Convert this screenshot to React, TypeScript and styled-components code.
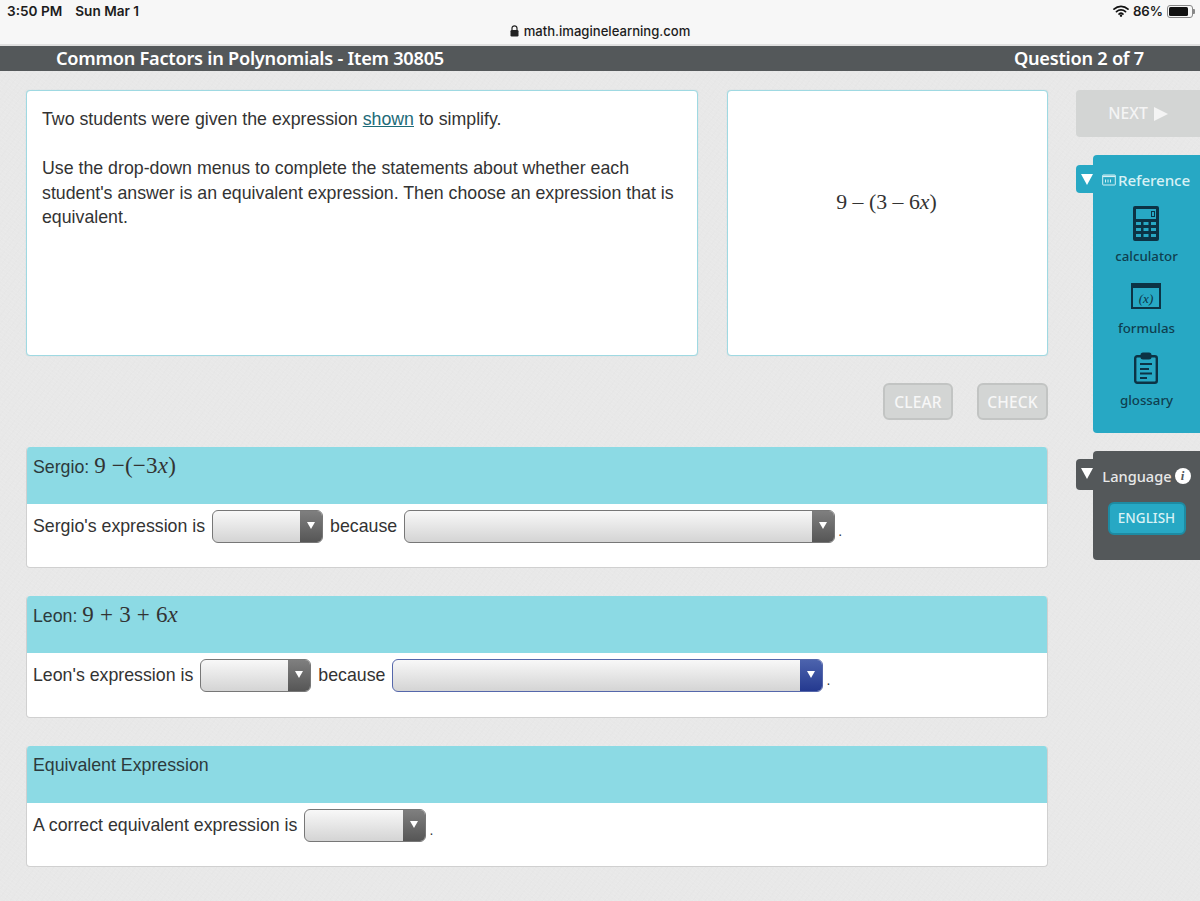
import React from "react";
import styled, { createGlobalStyle } from "styled-components";

const Global = createGlobalStyle`
  html, body { margin: 0; padding: 0; }
  body {
    width: 1200px; height: 901px; overflow: hidden;
    background-color: #e8e8e8;
    font-family: "Liberation Sans", Arial, sans-serif;
    color: #333;
  }
`;

const Page = styled.div`
  width: 1200px;
  height: 901px;
  display: flex;
  flex-direction: column;
  overflow: hidden;
  background-color: #e8e8e8;
  background-image:
    repeating-linear-gradient(37deg, rgba(255,255,255,.07) 0 1px, transparent 1px 3px),
    repeating-linear-gradient(-53deg, rgba(0,0,0,.008) 0 1px, transparent 1px 5px);
`;

const Browser = styled.header`
  height: 46px;
  box-sizing: border-box;
  padding: 3px 7px 0;
  background: #f7f7f7;
  border-bottom: 2px solid #e0e0e0;
  display: grid;
  grid-template-columns: 1fr auto 1fr;
  font-family: "Inter", "Liberation Sans", sans-serif;
  color: #1c1c1c;
`;
const StatusLeft = styled.div`
  font-size: 13.6px; font-weight: 600; line-height: 16px; display: flex; gap: 13px;
`;
const Url = styled.div`
  font-size: 13.1px; line-height: 18px; font-weight: 500; margin-top: 14px;
  display: flex; align-items: center; gap: 5px; white-space: nowrap;
`;
const StatusRight = styled.div`
  justify-self: end; display: flex; align-items: flex-start; gap: 4px;
  font-size: 13.2px; font-weight: 600; line-height: 16px;
`;
const Battery = styled.span`
  position: relative;
  width: 26px; height: 13px; box-sizing: border-box; margin-top: 2px; padding: 1px;
  border: 1px solid #888; border-radius: 3px; display: block;
  &::before { content: ""; display: block; width: 86%; height: 100%; background: #111; border-radius: 1.5px; }
  &::after { content: ""; position: absolute; right: -3px; top: 3px; width: 2px; height: 5px; background: #888; border-radius: 0 1px 1px 0; }
`;

const TitleBar = styled.div`
  height: 25px;
  background: #54585a;
  color: #fff;
  display: flex;
  justify-content: space-between;
  padding: 0 56px;
  font-family: "Noto Sans", sans-serif;
  font-weight: 600;
  font-size: 18.2px;
  line-height: 24px;
  white-space: nowrap;
`;
const TitleText = styled.span`letter-spacing: -.25px;`;
const TitleCount = styled(TitleText)``;

const Body = styled.main`
  flex: 1;
  display: flex;
  padding: 19px 0 0 26px;
  gap: 28px;
`;
const Content = styled.div`
  width: 1022px;
  display: flex;
  flex-direction: column;
`;
const TopRow = styled.div`
  display: flex;
  justify-content: space-between;
  height: 266px;
`;
const Card = styled.section<{ $w: number }>`
  width: ${p => p.$w}px;
  box-sizing: border-box;
  background: #fff;
  border: 1px solid #9fd9e2;
  border-radius: 4px;
  box-shadow: 0 0 1px rgba(120,190,200,.5);
`;
const Prompt = styled(Card)`
  padding: 16px 15px;
  font-size: 17.75px;
  line-height: 24.5px;
  color: #333;
`;
const Para = styled.p`
  margin: 0 0 24.5px;
`;
const Shown = styled.span`
  color: #1d6b78;
  text-decoration: underline;
`;
const FigureCard = styled(Card)`
  display: flex;
  justify-content: center;
  padding: 98px 2px 0 0;
  font-family: "Liberation Serif", serif;
  font-size: 21.8px;
  line-height: 26px;
  color: #333;
  white-space: pre;
`;
const Actions = styled.div`
  display: flex;
  justify-content: flex-end;
  gap: 24px;
  margin-top: 27px;
  height: 37px;
`;
const GhostButton = styled.div<{ $w: number }>`
  width: ${p => p.$w}px;
  box-sizing: border-box;
  background: #d3d5d4;
  border: 2px solid #c2c4c3;
  border-radius: 6px;
  color: #f7f7f7;
  font-family: "Noto Sans", sans-serif;
  font-size: 15.5px;
  font-weight: 500;
  line-height: 35px;
  text-align: center;
  letter-spacing: .2px;
`;
const Questions = styled.div`
  margin-top: 27px;
  display: flex;
  flex-direction: column;
  gap: 28px;
`;
const Question = styled.section`
  height: 121.4px;
  box-sizing: border-box;
  background: #fff;
  border: 1px solid #d0d0d0;
  border-top: 0;
  border-radius: 4px;
  overflow: hidden;
  font-size: 17.75px;
  color: #333;
`;
const QuestionHead = styled.div`
  height: 57px;
  box-sizing: border-box;
  background: #8cdae4;
  padding: 7px 6px 0;
  line-height: 24px;
  color: #2c3a3d;
`;
const MathText = styled.span`
  font-family: "Liberation Serif", serif;
  font-size: 23px;
  letter-spacing: .2px;
  color: #333;
`;
const QuestionRow = styled.div`
  display: flex;
  align-items: center;
  gap: 7px;
  padding: 6px 6px 0;
  height: 33px;
  white-space: nowrap;
`;
const Select = styled.div<{ $w: number; $active?: boolean }>`
  width: ${p => p.$w}px;
  height: 33px;
  box-sizing: border-box;
  flex: none;
  display: flex;
  justify-content: flex-end;
  border: 1.5px solid ${p => (p.$active ? "#5567ab" : "#777")};
  border-radius: 6px;
  overflow: hidden;
  background: linear-gradient(#f8f8f8, #d4d4d4);
`;
const SelectArrow = styled.span<{ $active?: boolean }>`
  width: 22px;
  display: flex;
  justify-content: center;
  padding-top: 11px;
  box-sizing: border-box;
  background: ${p => (p.$active ? "linear-gradient(#4c63ad, #24398f)" : "linear-gradient(#7f7f7f, #565656)")};
  &::before {
    content: "";
    width: 0; height: 0;
    border-left: 4px solid transparent;
    border-right: 4px solid transparent;
    border-top: 7px solid #fff;
  }
`;
const Dot = styled.span`
  margin-left: -4px;
  align-self: flex-end;
  line-height: 16px;
  margin-bottom: 4px;
  font-size: 14px;
`;

const Side = styled.aside`
  width: 124px;
  display: flex;
  flex-direction: column;
`;
const NextButton = styled.div`
  height: 47px;
  background: #d3d5d4;
  border-radius: 4px 0 0 4px;
  display: flex;
  align-items: center;
  justify-content: center;
  gap: 6px;
  color: #f4f4f4;
  font-family: "Noto Sans", sans-serif;
  font-size: 15.8px;
  font-weight: 500;
  line-height: 45px;
  padding-left: 0;
  margin-bottom: 18px;
`;
const Flyout = styled.div<{ $mt?: number }>`
  display: flex;
  align-items: flex-start;
  margin-top: ${p => p.$mt ?? 0}px;
`;
const FlyTab = styled.div<{ $bg: string; $h: number; $top: number }>`
  flex: none;
  width: 17px;
  height: ${p => p.$h}px;
  margin-top: ${p => p.$top}px;
  background: ${p => p.$bg};
  border-radius: 4px 0 0 4px;
  display: flex;
  justify-content: center;
  padding-top: 9px;
  box-sizing: border-box;
  padding-left: 5px;
`;
const Panel = styled.div<{ $bg: string; $h: number }>`
  flex: 1;
  height: ${p => p.$h}px;
  background: ${p => p.$bg};
  border-radius: 4px 0 0 4px;
  box-sizing: border-box;
  font-family: "Noto Sans", sans-serif;
  display: flex;
  flex-direction: column;
  align-items: center;
`;
const RefHead = styled.div`
  display: flex;
  align-items: center;
  gap: 2px;
  margin-top: 15px;
  padding-right: 1px;
  color: #d7f1f5;
  font-size: 15.2px;
  font-weight: 500;
  line-height: 20px;
  letter-spacing: -.1px;
  height: 20px;
`;
const Tool = styled.div<{ $iconH: number; $gap: number; $top: number }>`
  display: flex;
  flex-direction: column;
  align-items: center;
  margin-top: ${p => p.$top}px;
  color: #0f3f50;
  font-size: 13.3px;
  font-weight: 500;
  line-height: 18px;
  svg { display: block; height: ${p => p.$iconH}px; margin-bottom: ${p => p.$gap}px; }
`;
const ToolList = styled.div`
  margin-top: 16px;
  display: flex;
  flex-direction: column;
  align-items: center;
`;
const LangHead = styled.div`
  display: flex;
  align-items: center;
  gap: 3px;
  margin-top: 15px;
  color: #e8e8e8;
  font-size: 14.6px;
  font-weight: 500;
  line-height: 20px;
`;
const InfoDot = styled.span`
  width: 16px; height: 16px; border-radius: 50%;
  background: #fff; color: #54585a;
  font-family: "Liberation Serif", serif; font-style: italic; font-weight: 700;
  font-size: 13px; line-height: 16px; text-align: center;
`;
const LangButton = styled.div`
  margin-top: 16px;
  width: 78px;
  height: 33px;
  box-sizing: border-box;
  background: #27a8c4;
  border: 2px solid #1d8ba3;
  border-radius: 6px;
  color: #d9f2f6;
  font-size: 13.5px;
  font-weight: 500;
  line-height: 29px;
  text-align: center;
`;
const TriangleDown = styled.span`
  width: 0; height: 0;
  border-left: 6px solid transparent;
  border-right: 6px solid transparent;
  border-top: 11px solid #fff;
`;
const TriangleRight = styled.span`
  width: 0; height: 0;
  border-top: 7.5px solid transparent;
  border-bottom: 7.5px solid transparent;
  border-left: 14px solid #f4f4f4;
`;
const Wifi = () => (
  <svg width="16" height="12" viewBox="0 0 24 18" style={{ marginTop: 2 }}>
    <path d="M1.5 6.2a15.5 15.5 0 0 1 21 0M5.3 10a10 10 0 0 1 13.4 0M9 13.6a4.8 4.8 0 0 1 6 0" fill="none" stroke="#111" strokeWidth="2.6" strokeLinecap="round" />
    <circle cx="12" cy="16" r="1.8" fill="#111" />
  </svg>
);
const Lock = () => (
  <svg width="9" height="12" viewBox="0 0 9 12">
    <path d="M2 5V3.3a2.5 2.5 0 0 1 5 0V5" fill="none" stroke="#222" strokeWidth="1.2" />
    <rect x=".5" y="5" width="8" height="6.5" rx="1.2" fill="#222" />
  </svg>
);
const BookIcon = () => (
  <svg width="14" height="12" viewBox="0 0 14 12" fill="none" stroke="#d7f1f5">
    <rect x=".7" y="1" width="12.6" height="10" rx=".5" strokeWidth="1" />
    <path d="M.7 2.4h12.6" strokeWidth="1.4" />
    <path d="M3.5 5.5v3M6 5.5v3M8.5 5.5v3" strokeWidth="1" />
  </svg>
);
const Calculator = () => (
  <svg viewBox="0 0 26 35" width="26" fill="#0c3345">
    <path fillRule="evenodd" d="M2 0h22a2 2 0 0 1 2 2v31a2 2 0 0 1-2 2H2a2 2 0 0 1-2-2V2a2 2 0 0 1 2-2Zm1 3v10h20V3H3Z" />
    <path fillRule="evenodd" d="M18 5h4v6h-4V5Zm1 1v4h2V6h-2Z" />
    <g fill="#27a8c4">
      <rect x="3" y="16" width="5" height="3" /><rect x="10.5" y="16" width="5" height="3" /><rect x="18" y="16" width="5" height="3" />
      <rect x="3" y="22" width="5" height="3" /><rect x="10.5" y="22" width="5" height="3" /><rect x="18" y="22" width="5" height="3" />
      <rect x="3" y="28" width="5" height="3" /><rect x="10.5" y="28" width="5" height="3" /><rect x="18" y="28" width="5" height="3" />
    </g>
  </svg>
);
const Formulas = () => (
  <svg viewBox="0 0 30 26" width="30">
    <rect x="1" y="1" width="28" height="24" fill="none" stroke="#0c3345" strokeWidth="2" />
    <rect x="0" y="0" width="30" height="5" fill="#0c3345" />
    <text x="15" y="20" textAnchor="middle" fontFamily="'Liberation Serif', serif" fontStyle="italic" fontSize="13" fill="#0c3345">(x)</text>
  </svg>
);
const Clipboard = () => (
  <svg viewBox="0 0 24 32" width="24" fill="none" stroke="#0c3345">
    <rect x="1.2" y="4.2" width="21.6" height="26.6" rx="2" strokeWidth="2.4" />
    <rect x="7.5" y="1.5" width="9" height="5" rx="1.5" strokeWidth="2" fill="#0c3345" />
    <path d="M6 12h12M6 17h9M6 21.5h12M6 26h7" strokeWidth="1.8" />
  </svg>
);

export default function App() {
  return (
    <Page>
      <Global />
      <Browser>
        <StatusLeft><span>3:50 PM</span><span>Sun Mar 1</span></StatusLeft>
        <Url><Lock />math.imaginelearning.com</Url>
        <StatusRight><Wifi />86%<Battery /></StatusRight>
      </Browser>
      <TitleBar>
        <TitleText>Common Factors in Polynomials - Item 30805</TitleText>
        <TitleCount>Question 2 of 7</TitleCount>
      </TitleBar>
      <Body>
        <Content>
          <TopRow>
            <Prompt $w={672}>
              <Para>Two students were given the expression <Shown>shown</Shown> to simplify.</Para>
              <Para>Use the drop-down menus to complete the statements about whether each student's answer is an equivalent expression. Then choose an expression that is equivalent.</Para>
            </Prompt>
            <FigureCard $w={321}>9 – (3 – 6<i>x</i>)</FigureCard>
          </TopRow>
          <Actions>
            <GhostButton $w={70}>CLEAR</GhostButton>
            <GhostButton $w={71}>CHECK</GhostButton>
          </Actions>
          <Questions>
            <Question>
              <QuestionHead>Sergio: <MathText>9 −(−3<i>x</i>)</MathText></QuestionHead>
              <QuestionRow>
                Sergio's expression is
                <Select $w={111}><SelectArrow /></Select>
                because
                <Select $w={431}><SelectArrow /></Select>
                <Dot>.</Dot>
              </QuestionRow>
            </Question>
            <Question>
              <QuestionHead>Leon: <MathText>9 + 3 + 6<i>x</i></MathText></QuestionHead>
              <QuestionRow>
                Leon's expression is
                <Select $w={111}><SelectArrow /></Select>
                because
                <Select $w={431} $active><SelectArrow $active /></Select>
                <Dot>.</Dot>
              </QuestionRow>
            </Question>
            <Question>
              <QuestionHead>Equivalent Expression</QuestionHead>
              <QuestionRow>
                A correct equivalent expression is
                <Select $w={122}><SelectArrow /></Select>
                <Dot>.</Dot>
              </QuestionRow>
            </Question>
          </Questions>
        </Content>
        <Side>
          <NextButton>NEXT <TriangleRight /></NextButton>
          <Flyout>
            <FlyTab $bg="#27a8c4" $h={28} $top={10}><TriangleDown /></FlyTab>
            <Panel $bg="#27a8c4" $h={278}>
              <RefHead><BookIcon />Reference</RefHead>
              <ToolList>
                <Tool $iconH={35} $gap={6} $top={0}><Calculator />calculator</Tool>
                <Tool $iconH={26} $gap={10} $top={18}><Formulas />formulas</Tool>
                <Tool $iconH={32} $gap={7} $top={15}><Clipboard />glossary</Tool>
              </ToolList>
            </Panel>
          </Flyout>
          <Flyout $mt={18}>
            <FlyTab $bg="#54585a" $h={31} $top={8}><TriangleDown /></FlyTab>
            <Panel $bg="#54585a" $h={109}>
              <LangHead>Language<InfoDot>i</InfoDot></LangHead>
              <LangButton>ENGLISH</LangButton>
            </Panel>
          </Flyout>
        </Side>
      </Body>
    </Page>
  );
}
